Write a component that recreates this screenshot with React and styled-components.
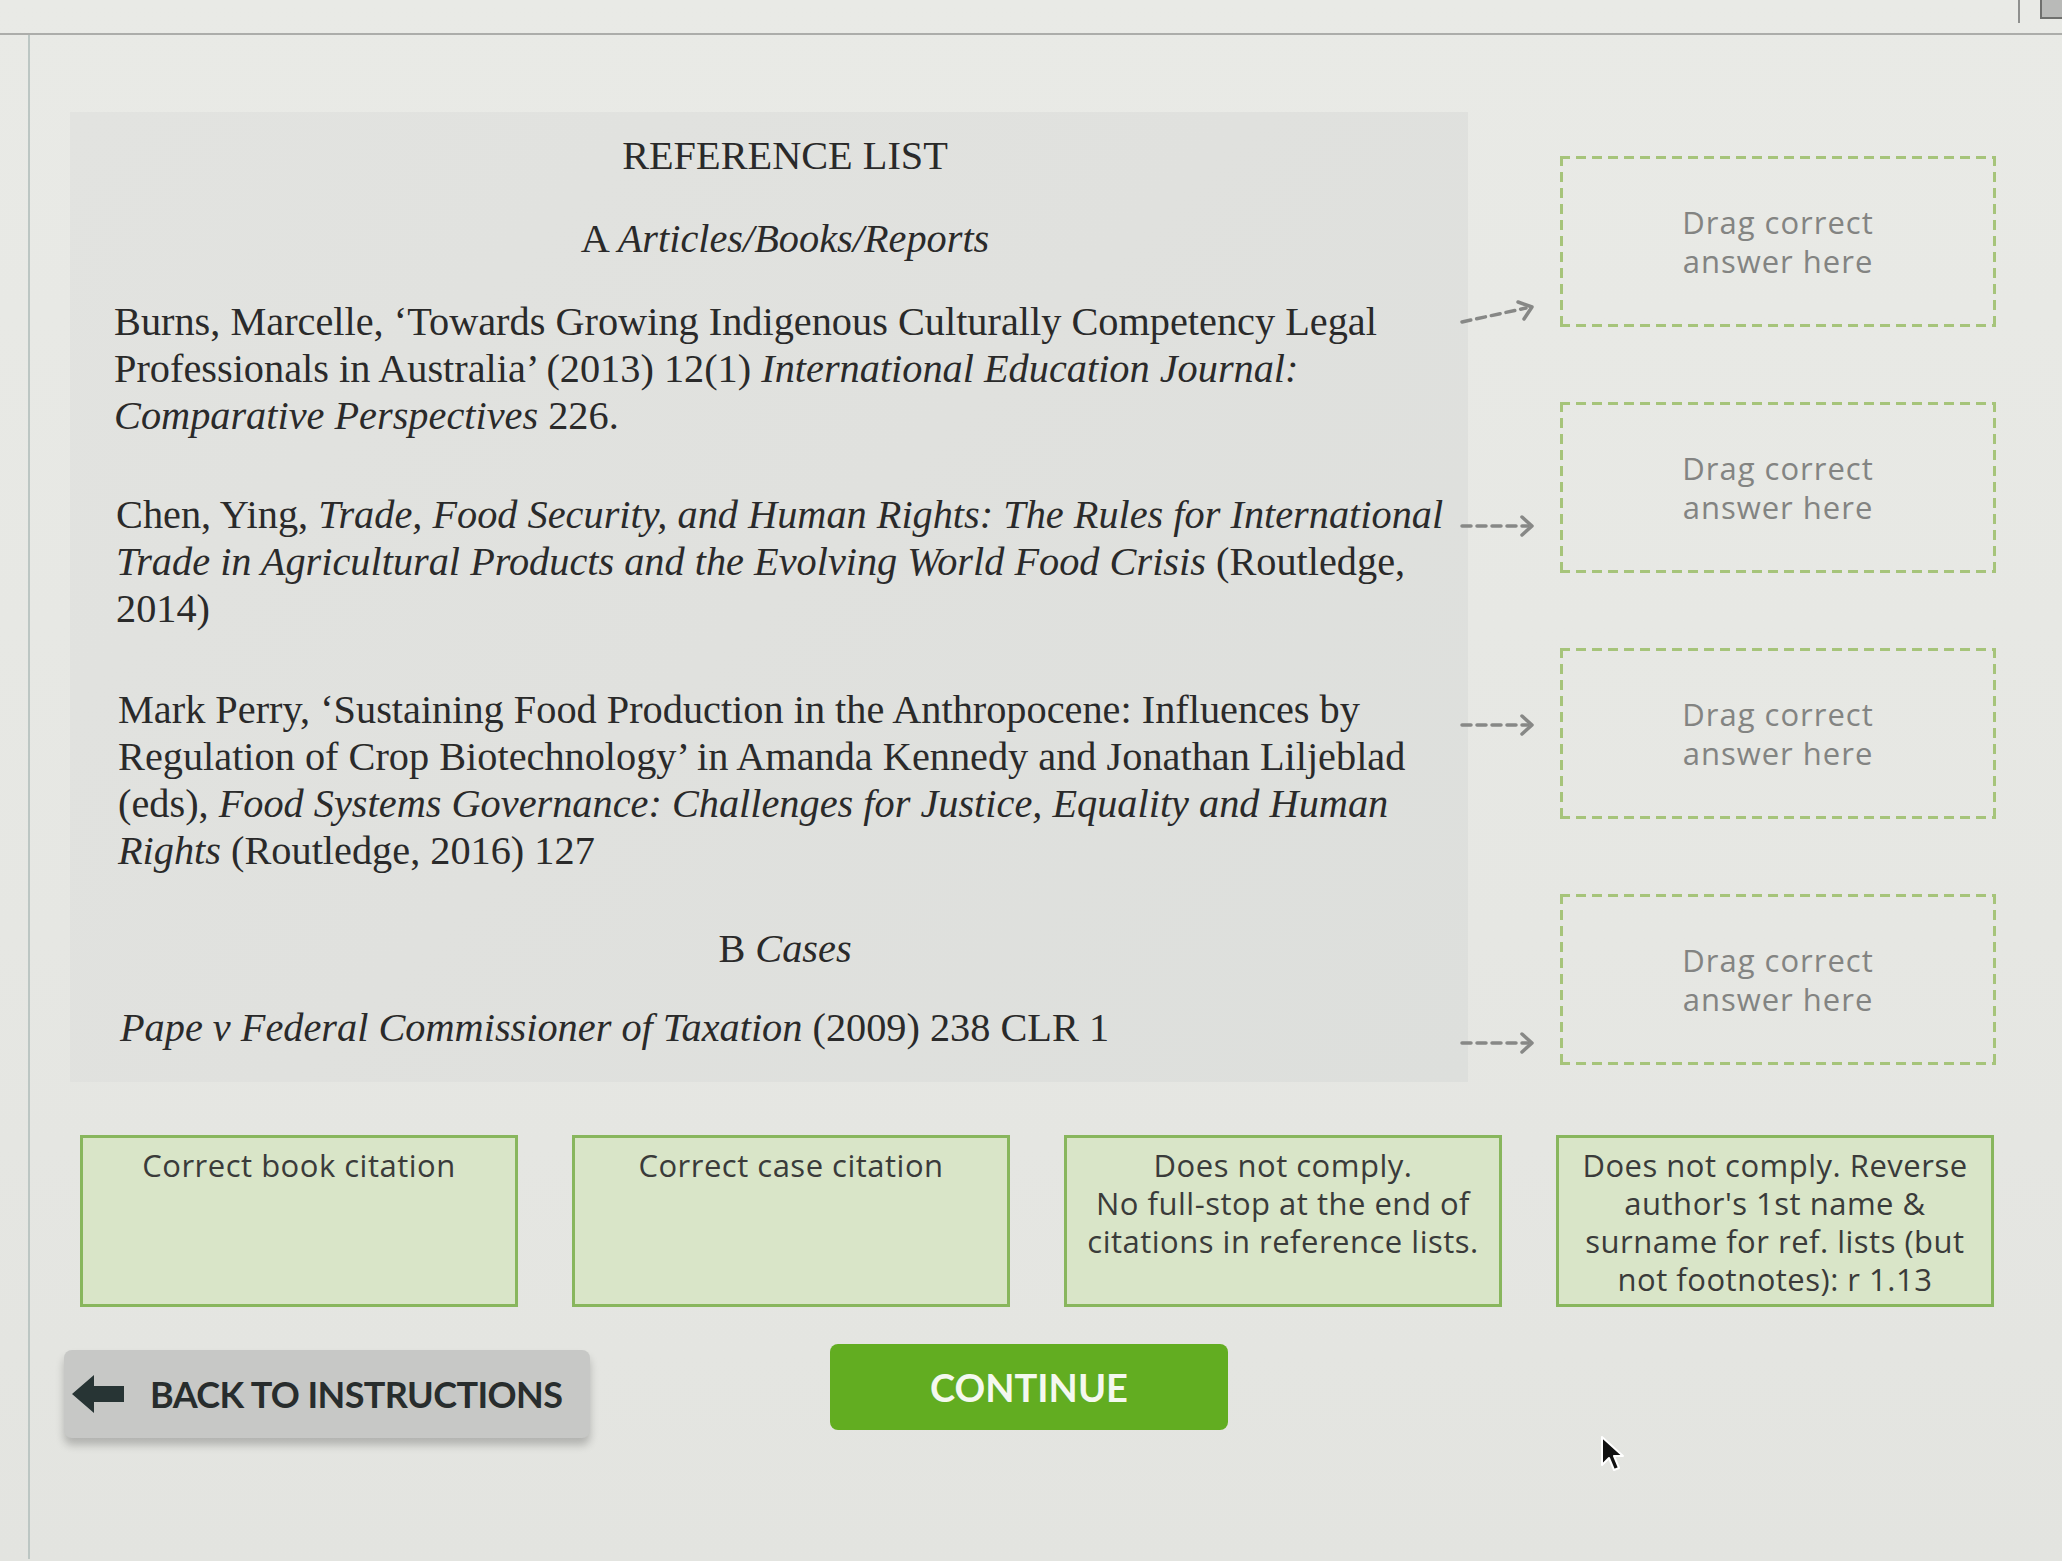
import React from "react";
import styled, { createGlobalStyle } from "styled-components";

const GlobalStyle = createGlobalStyle`
  html, body {
    margin: 0;
    padding: 0;
    background: #e7e8e4;
  }
  * {
    box-sizing: border-box;
  }
`;

const Page = styled.div`
  position: relative;
  width: 2062px;
  height: 1561px;
  overflow: hidden;
  background: linear-gradient(180deg, #e9eae6 0%, #e6e7e3 60%, #e3e4e0 100%);
`;

const TopBar = styled.div`
  height: 35px;
  border-bottom: 2px solid #acadaa;
  display: flex;
  justify-content: flex-end;
  align-items: flex-start;
  gap: 20px;
  .tick {
    width: 2px;
    height: 23px;
    background: #8f908e;
  }
  .corner {
    width: 22px;
    height: 19px;
    background: #b9bab8;
    border: 2px solid #6f706e;
    border-top: none;
    border-right: none;
  }
`;

const Frame = styled.div`
  display: flex;
`;

const Rail = styled.div`
  width: 30px;
  min-height: 1524px;
  border-right: 2px solid #bcc6c3;
`;

const Main = styled.div`
  flex: 1;
  padding: 77px 0 0 40px;
`;

const TopRow = styled.div`
  display: flex;
  align-items: flex-start;
  gap: 92px;
`;

const Panel = styled.div`
  width: 1398px;
  height: 970px;
  padding: 20px 12px 0 44px;
  background: linear-gradient(135deg, #e2e3e0 0%, #e0e1de 50%, #dddfdc 100%);
  font-family: "Liberation Serif", "Times New Roman", serif;
  font-size: 40.3px;
  line-height: 47px;
  color: #2a2a2a;
`;

const Heading = styled.div`
  text-align: center;
  margin-top: ${(p) => p.$gap || 0}px;
`;

const Entry = styled.div`
  position: relative;
  white-space: nowrap;
  margin-top: ${(p) => p.$gap || 0}px;
  margin-left: ${(p) => p.$shift || 0}px;
`;

const Connector = styled.svg`
  position: absolute;
  left: calc(100% + 4px);
  top: ${(p) => p.$top}px;
  width: 80px;
  height: 26px;
  overflow: visible;
`;

const DropColumn = styled.div`
  display: flex;
  flex-direction: column;
  gap: 75px;
  padding-top: 44px;
`;

const DropBox = styled.div`
  width: 436px;
  height: 171px;
  display: flex;
  align-items: center;
  justify-content: center;
  text-align: center;
  font-family: "Open Sans", "Lato", sans-serif;
  font-size: 31px;
  line-height: 39px;
  letter-spacing: 1px;
  color: #838482;
  background-image:
    repeating-linear-gradient(90deg, #a6c47a 0 10px, transparent 10px 16px),
    repeating-linear-gradient(90deg, #a6c47a 0 10px, transparent 10px 16px),
    repeating-linear-gradient(180deg, #a6c47a 0 10px, transparent 10px 16px),
    repeating-linear-gradient(180deg, #a6c47a 0 10px, transparent 10px 16px);
  background-size: 100% 3px, 100% 3px, 3px 100%, 3px 100%;
  background-position: 0 0, 0 100%, 0 0, 100% 0;
  background-repeat: no-repeat;
`;

const AnswerRow = styled.div`
  display: flex;
  gap: 54px;
  margin: 53px 0 0 10px;
`;

const AnswerBox = styled.div`
  width: 438px;
  height: 172px;
  border: 3px solid #88b65d;
  background: #d9e5c8;
  padding-top: 8px;
  text-align: center;
  font-family: "Open Sans", "Lato", sans-serif;
  font-size: 31px;
  line-height: 38px;
  letter-spacing: 0.5px;
  color: #3a3b3a;
`;

const ButtonRow = styled.div`
  display: flex;
  align-items: flex-start;
  margin: 43px 0 0 -6px;
`;

const BackButton = styled.button`
  width: 526px;
  height: 88px;
  display: flex;
  align-items: center;
  gap: 26px;
  padding: 0 0 0 8px;
  border: none;
  border-radius: 8px;
  background: #c7c8c6;
  box-shadow: 0 7px 8px rgba(0, 0, 0, 0.22);
  font-family: "Lato", sans-serif;
  font-weight: 700;
  font-size: 36px;
  letter-spacing: -0.6px;
  color: #282d2d;
  svg {
    width: 52px;
    height: 40px;
    flex: none;
  }
`;

const ContinueButton = styled.button`
  width: 398px;
  height: 86px;
  margin: -6px 0 0 240px;
  border: none;
  border-radius: 8px;
  background: #62ad21;
  font-family: "Lato", sans-serif;
  font-weight: 700;
  font-size: 38px;
  letter-spacing: 0px;
  color: #f4f8ef;
`;

const Cursor = styled.svg`
  position: absolute;
  left: 1600px;
  top: 1435px;
  width: 26px;
  height: 40px;
`;

const Arrow = ({ top, tilt }) => (
  <Connector $top={top} viewBox="0 0 80 26">
    <g
      fill="none"
      stroke="#878886"
      strokeWidth="3.5"
      strokeLinecap="round"
      strokeLinejoin="round"
    >
      {tilt ? (
        <>
          <path d="M2 22 L66 8" strokeDasharray="9 6" />
          <path d="M58 2 L72 7 L64 19" />
        </>
      ) : (
        <>
          <path d="M2 13 L68 13" strokeDasharray="9 6" />
          <path d="M62 4 L72 13 L62 22" />
        </>
      )}
    </g>
  </Connector>
);

const drops = [1, 2, 3, 4];

export default function App() {
  return (
    <Page>
      <GlobalStyle />
      <TopBar>
        <div className="tick" />
        <div className="corner" />
      </TopBar>
      <Frame>
        <Rail />
        <Main>
          <TopRow>
            <Panel>
              <Heading>REFERENCE LIST</Heading>
              <Heading $gap={36}>
                A <i>Articles/Books/Reports</i>
              </Heading>
              <Entry $gap={36}>
                Burns, Marcelle, ‘Towards Growing Indigenous Culturally Competency Legal
                <br />
                Professionals in Australia’ (2013) 12(1) <i>International Education Journal:</i>
                <br />
                <i>Comparative Perspectives</i> 226.
                <Arrow top={2} tilt />
              </Entry>
              <Entry $gap={52} $shift={2}>
                Chen, Ying, <i>Trade, Food Security, and Human Rights: The Rules for International</i>
                <br />
                <i>Trade in Agricultural Products and the Evolving World Food Crisis</i> (Routledge,
                <br />
                2014)
                <Arrow top={22} />
              </Entry>
              <Entry $gap={54} $shift={4}>
                Mark Perry, ‘Sustaining Food Production in the Anthropocene: Influences by
                <br />
                Regulation of Crop Biotechnology’ in Amanda Kennedy and Jonathan Liljeblad
                <br />
                (eds), <i>Food Systems Governance: Challenges for Justice, Equality and Human</i>
                <br />
                <i>Rights</i> (Routledge, 2016) 127
                <Arrow top={26} />
              </Entry>
              <Heading $gap={51}>
                B <i>Cases</i>
              </Heading>
              <Entry $gap={32} $shift={6}>
                <i>Pape v Federal Commissioner of Taxation</i> (2009) 238 CLR 1
                <Arrow top={26} />
              </Entry>
            </Panel>
            <DropColumn>
              {drops.map((d) => (
                <DropBox key={d}>
                  Drag correct
                  <br />
                  answer here
                </DropBox>
              ))}
            </DropColumn>
          </TopRow>
          <AnswerRow>
            <AnswerBox>Correct book citation</AnswerBox>
            <AnswerBox>Correct case citation</AnswerBox>
            <AnswerBox>
              Does not comply.
              <br />
              No full-stop at the end of
              <br />
              citations in reference lists.
            </AnswerBox>
            <AnswerBox>
              Does not comply. Reverse
              <br />
              author's 1st name &amp;
              <br />
              surname for ref. lists (but
              <br />
              not footnotes): r 1.13
            </AnswerBox>
          </AnswerRow>
          <ButtonRow>
            <BackButton>
              <svg viewBox="0 0 52 40">
                <polygon points="0,20 22,1 22,12 52,12 52,28 22,28 22,39" fill="#273434" />
              </svg>
              BACK TO INSTRUCTIONS
            </BackButton>
            <ContinueButton>CONTINUE</ContinueButton>
          </ButtonRow>
        </Main>
      </Frame>
      <Cursor viewBox="0 0 26 40">
        <path
          d="M2 2 L2 30 L9 23 L14 35 L19 33 L14 21 L23 21 Z"
          fill="#111"
          stroke="#fff"
          strokeWidth="2"
          strokeLinejoin="round"
        />
      </Cursor>
    </Page>
  );
}
